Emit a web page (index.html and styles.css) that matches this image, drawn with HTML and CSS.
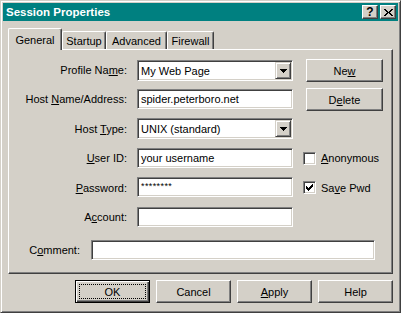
FILE: index.html
```html
<!DOCTYPE html>
<html lang="en">
<head>
    <meta charset="UTF-8">
    <title>Session Properties</title>
    <link rel="stylesheet" href="styles.css">
</head>
<body>
    <div class="window">
        <div class="titlebar">
            <span class="title">Session Properties</span>
            <div class="title-buttons">
                <span class="tbtn help">?</span>
                <span class="tbtn">
                    <svg width="9" height="7" viewBox="0 0 9 7" shape-rendering="crispEdges">
                        <path d="M0 0h2v1h-2z M7 0h2v1h-2z M1 1h2v1h-2z M6 1h2v1h-2z M2 2h2v1h-2z M5 2h2v1h-2z M3 3h3v1h-3z M2 4h2v1h-2z M5 4h2v1h-2z M1 5h2v1h-2z M6 5h2v1h-2z M0 6h2v1h-2z M7 6h2v1h-2z" fill="#000"/>
                    </svg>
                </span>
            </div>
        </div>

        <div class="tabs">
            <div class="tab active tab-general">General</div>
            <div class="tab tab-startup">Startup</div>
            <div class="tab tab-advanced">Advanced</div>
            <div class="tab tab-firewall">Firewall</div>
        </div>

        <div class="panel">
            <div class="form">
                <label class="lbl">Profile Na<u>m</u>e:</label>
                <div class="field combo">
                    <span class="value">My Web Page</span>
                    <span class="drop">
                        <svg width="7" height="4" viewBox="0 0 7 4" shape-rendering="crispEdges">
                            <path d="M0 0h7v1h-7z M1 1h5v1h-5z M2 2h3v1h-3z M3 3h1v1h-1z" fill="#000"/>
                        </svg>
                    </span>
                </div>
                <button class="btn side-btn">Ne<u>w</u></button>

                <label class="lbl">Host <u>N</u>ame/Address:</label>
                <div class="field"><span class="value">spider.peterboro.net</span></div>
                <button class="btn side-btn">D<u>e</u>lete</button>

                <label class="lbl">Host <u>T</u>ype:</label>
                <div class="field combo">
                    <span class="value">UNIX (standard)</span>
                    <span class="drop">
                        <svg width="7" height="4" viewBox="0 0 7 4" shape-rendering="crispEdges">
                            <path d="M0 0h7v1h-7z M1 1h5v1h-5z M2 2h3v1h-3z M3 3h1v1h-1z" fill="#000"/>
                        </svg>
                    </span>
                </div>

                <label class="lbl"><u>U</u>ser ID:</label>
                <div class="field"><span class="value">your username</span></div>
                <div class="check">
                    <span class="box"></span>
                    <span><u>A</u>nonymous</span>
                </div>

                <label class="lbl"><u>P</u>assword:</label>
                <div class="field"><span class="value pw">********</span></div>
                <div class="check">
                    <span class="box">
                        <svg width="7" height="7" viewBox="0 0 7 7" shape-rendering="crispEdges">
                            <path d="M6 0h1v1h-1z M5 1h2v1h-2z M0 2h1v1h-1z M4 2h3v1h-3z M0 3h2v1h-2z M3 3h3v1h-3z M0 4h5v1h-5z M1 5h3v1h-3z M2 6h1v1h-1z" fill="#000"/>
                        </svg>
                    </span>
                    <span>Sa<u>v</u>e Pwd</span>
                </div>

                <label class="lbl">A<u>c</u>count:</label>
                <div class="field"></div>
            </div>

            <div class="comment-row">
                <label class="lbl">C<u>o</u>mment:</label>
                <div class="field comment"></div>
            </div>
        </div>

        <div class="actions">
            <button class="btn default"><span class="focus">OK</span></button>
            <button class="btn">Cancel</button>
            <button class="btn"><u>A</u>pply</button>
            <button class="btn">Help</button>
        </div>
    </div>
</body>
</html>
```

FILE: styles.css
```css
body {
    margin: 0;
    font-family: "Liberation Sans", Arial, sans-serif;
    font-size: 11px;
    color: #000;
}
.window {
    width: 401px;
    height: 313px;
    box-sizing: border-box;
    background: #d4d0c8;
    border: 1px solid;
    border-color: #d4d0c8 #404040 #404040 #d4d0c8;
    box-shadow: inset 1px 1px #fff, inset -1px -1px #808080;
    padding: 2px;
}
.titlebar {
    height: 18px;
    background: #008080;
    color: #fff;
    display: flex;
    align-items: center;
    justify-content: space-between;
    padding: 0 2px 0 3px;
}
.title {
    font-weight: bold;
    font-size: 11.5px;
}
.title-buttons {
    display: flex;
    gap: 2px;
}
.tbtn {
    width: 16px;
    height: 14px;
    box-sizing: border-box;
    background: #d4d0c8;
    border: 1px solid;
    border-color: #fff #404040 #404040 #fff;
    box-shadow: inset -1px -1px #808080;
    display: flex;
    align-items: center;
    justify-content: center;
}
.tbtn.help {
    color: #000;
    font-weight: bold;
    font-size: 12px;
}
.tabs {
    display: flex;
    align-items: flex-end;
    height: 21px;
    margin: 7px 5px 0;
}
.tab {
    height: 18px;
    box-sizing: border-box;
    border: 1px solid;
    border-bottom: none;
    border-color: #fff #404040 #404040 #fff;
    border-radius: 2px 2px 0 0;
    box-shadow: inset -1px 0 #808080;
    display: flex;
    align-items: center;
    justify-content: center;
    padding-top: 1px;
}
.tab.active {
    height: 22px;
    margin-bottom: -1px;
    padding-top: 0;
    position: relative;
    z-index: 1;
    background: #d4d0c8;
}
.tab-general { width: 54px; }
.tab-startup { width: 44px; }
.tab-advanced { width: 61px; }
.tab-firewall { width: 47px; }
.panel {
    height: 225px;
    box-sizing: border-box;
    margin: 0 5px;
    border: 1px solid;
    border-color: #fff #404040 #404040 #fff;
    box-shadow: inset -1px -1px #808080;
    padding: 10px 0 0 2px;
}
.form {
    display: grid;
    grid-template-columns: 116px 156px auto;
    grid-template-rows: 20px 20px 21px 20px 21px 20px;
    column-gap: 10px;
    row-gap: 9px;
}
.lbl {
    grid-column: 1;
    text-align: right;
    align-self: center;
    white-space: nowrap;
}
.field {
    height: 20px;
    box-sizing: border-box;
    align-self: start;
    background: #fff;
    border: 1px solid;
    border-color: #808080 #fff #fff #808080;
    box-shadow: inset 1px 1px #404040, inset -1px -1px #d4d0c8;
    padding: 1px;
    display: flex;
    align-items: center;
}
.field.combo {
    height: 21px;
}
.value {
    flex: 1;
    padding-left: 2px;
    white-space: nowrap;
}
.pw {
    font-size: 9px;
    align-self: flex-start;
    padding-top: 2px;
    letter-spacing: 0.4px;
}
.drop {
    width: 16px;
    height: 17px;
    box-sizing: border-box;
    background: #d4d0c8;
    border: 1px solid;
    border-color: #d4d0c8 #404040 #404040 #d4d0c8;
    box-shadow: inset 1px 1px #fff, inset -1px -1px #808080;
    display: flex;
    align-items: center;
    justify-content: center;
}
.btn {
    width: 75px;
    height: 23px;
    box-sizing: border-box;
    background: #d4d0c8;
    border: 1px solid;
    border-color: #fff #404040 #404040 #fff;
    box-shadow: inset -1px -1px #808080;
    font-family: inherit;
    font-size: 11px;
    color: #000;
    padding: 0;
}
.side-btn {
    width: 77px;
    align-self: start;
    justify-self: start;
    margin: -1px 0 0 3px;
}
.check {
    display: flex;
    align-items: center;
    gap: 5px;
    align-self: center;
    white-space: nowrap;
}
.box {
    width: 13px;
    height: 13px;
    box-sizing: border-box;
    background: #fff;
    border: 1px solid;
    border-color: #808080 #fff #fff #808080;
    box-shadow: inset 1px 1px #404040, inset -1px -1px #d4d0c8;
    display: flex;
    align-items: center;
    justify-content: center;
}
.comment-row {
    display: flex;
    align-items: center;
    margin-top: 13px;
}
.comment-row .lbl {
    width: 69px;
    margin-right: 11px;
}
.field.comment {
    width: 284px;
}
.actions {
    display: flex;
    justify-content: flex-end;
    gap: 6px;
    margin: 6px 5px 0;
}
.btn.default {
    border-color: #000;
    box-shadow: inset 1px 1px #fff, inset -1px -1px #404040, inset -2px -2px #808080;
    display: flex;
    padding: 3px;
}
.focus {
    flex: 1;
    border: 1px dotted #000;
    display: flex;
    align-items: center;
    justify-content: center;
}
```
